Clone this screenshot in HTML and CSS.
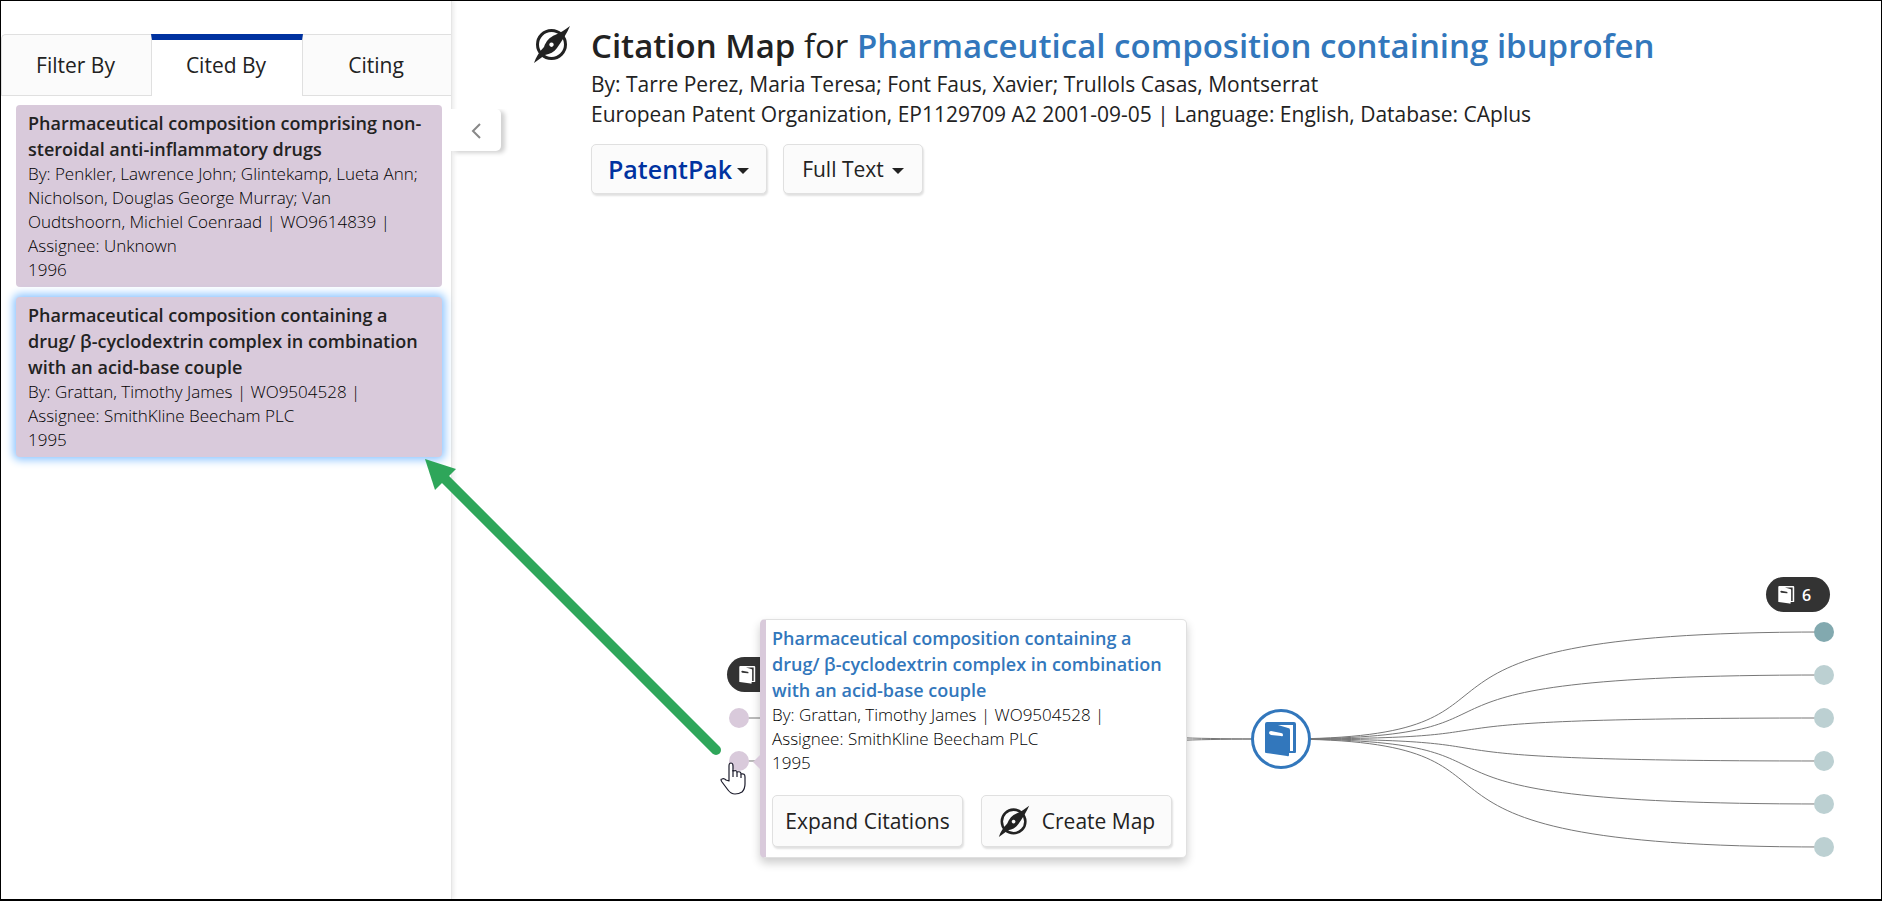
FILE: index.html
```html
<!DOCTYPE html>
<html lang="en">
<head>
    <meta charset="UTF-8">
    <meta name="viewport" content="width=device-width, initial-scale=1.0">
    <title>Citation Map</title>
    <link rel="stylesheet" href="styles.css">
</head>
<body>
    <svg class="symbols" aria-hidden="true">
        <symbol id="icon-compass" viewBox="0 0 38 38">
            <circle cx="18.5" cy="19.5" r="14" fill="none" stroke="currentColor" stroke-width="3"/>
            <path fill="currentColor" fill-rule="evenodd" d="M37 1 C34 8 29 16 24 23 C21 27 17 29 12 30 L1 38 C3 32 6 27 11 22 C13 16 17 12 22 10 C27 8 32 5 37 1 Z M18.500 17.500 a2.200 2.200 0 1 0 0.010 0 Z"/>
        </symbol>
        <symbol id="icon-book" viewBox="0 0 32 35">
            <path fill="currentColor" fill-rule="evenodd" d="M2 0 H29 Q31 0 31 2 V30 Q31 31 30 31 H24 V33 Q24 35 22 34 L1 31 Q0 31 0 30 V2 Q0 0 2 0 Z M13 3 L23 6 Q25 6 25 8 V29 H28 V3 Z M6 9 Q4 9 4 11 Q4 12 6 13 L16 14 Q18 15 18 13 Q18 11 16 11 Z"/>
        </symbol>
    </svg>

    <aside class="sidebar">
        <nav class="tabs">
            <button type="button" class="tab">Filter By</button>
            <button type="button" class="tab active">Cited By</button>
            <button type="button" class="tab">Citing</button>
        </nav>
        <button type="button" class="collapse" aria-label="Collapse panel">
            <svg width="10" height="16" viewBox="0 0 10 16"><path d="M9 1 L2 8 L9 15" fill="none" stroke="#888" stroke-width="2"/></svg>
        </button>
        <div class="cards">
            <article class="card">
                <h2>Pharmaceutical composition comprising non-steroidal anti-inflammatory drugs</h2>
                <p>By: Penkler, Lawrence John; Glintekamp, Lueta Ann; Nicholson, Douglas George Murray; Van Oudtshoorn, Michiel Coenraad | WO9614839 | Assignee: Unknown</p>
                <p>1996</p>
            </article>
            <article class="card selected">
                <h2>Pharmaceutical composition containing a drug/ β-cyclodextrin complex in combination with an acid-base couple</h2>
                <p>By: Grattan, Timothy James | WO9504528 | Assignee: SmithKline Beecham PLC</p>
                <p>1995</p>
            </article>
        </div>
    </aside>

    <main class="content">
        <header class="heading">
            <svg class="heading-icon"><use href="#icon-compass"/></svg>
            <div class="heading-text">
                <h1>Citation Map <span>for</span> <a href="#">Pharmaceutical composition containing ibuprofen</a></h1>
                <p>By: Tarre Perez, Maria Teresa; Font Faus, Xavier; Trullols Casas, Montserrat</p>
                <p>European Patent Organization, EP1129709 A2 2001-09-05 | Language: English, Database: CAplus</p>
                <div class="actions">
                    <button type="button" class="btn patentpak">PatentPak<i class="caret"></i></button>
                    <button type="button" class="btn fulltext">Full Text<i class="caret"></i></button>
                </div>
            </div>
        </header>

        <section class="map">
            <svg class="links" width="1181" height="300" viewBox="0 0 1181 300">
                <g fill="none" stroke="#777" stroke-width="1">
                    <path d="M581 140 C284 140 534 119 39 119"/>
                    <path d="M581 140 C284 140 534 162 39 162"/>
                    <path d="M581 140 C878 140 628 33 1124 33"/>
                    <path d="M581 140 C878 140 628 76 1124 76"/>
                    <path d="M581 140 C878 140 628 119 1124 119"/>
                    <path d="M581 140 C878 140 628 162 1124 162"/>
                    <path d="M581 140 C878 140 628 205 1124 205"/>
                    <path d="M581 140 C878 140 628 248 1124 248"/>
                </g>
                <g fill="#d9cadb">
                    <circle cx="39" cy="119" r="10"/>
                    <circle cx="39" cy="162" r="10"/>
                </g>
                <g fill="#bcd0d2">
                    <circle cx="1124" cy="33" r="10" fill="#82a9af"/>
                    <circle cx="1124" cy="76" r="10"/>
                    <circle cx="1124" cy="119" r="10"/>
                    <circle cx="1124" cy="162" r="10"/>
                    <circle cx="1124" cy="205" r="10"/>
                    <circle cx="1124" cy="248" r="10"/>
                </g>
            </svg>
            <div class="hub"><svg width="32" height="35"><use href="#icon-book"/></svg></div>
            <div class="badge badge-left"><svg width="17" height="18"><use href="#icon-book"/></svg>2</div>
            <div class="badge badge-right"><svg width="17" height="18"><use href="#icon-book"/></svg>6</div>

            <div class="popup">
                <h2><a href="#">Pharmaceutical composition containing a drug/ β-cyclodextrin complex in combination with an acid-base couple</a></h2>
                <p>By: Grattan, Timothy James | WO9504528 | Assignee: SmithKline Beecham PLC</p>
                <p>1995</p>
                <div class="popup-actions">
                    <button type="button" class="btn">Expand Citations</button>
                    <button type="button" class="btn"><svg width="32" height="32"><use href="#icon-compass"/></svg>Create Map</button>
                </div>
            </div>

            <svg class="pointer" width="26" height="34" viewBox="0 0 26 34">
                <path fill="#fff" stroke="#1b1b2b" stroke-width="1.200" stroke-linejoin="round" d="M9 19 V4 Q9 1 11 1 Q13 1 13 4 V9 Q17 8 17 10 Q21 9 21 12 Q25 11 25 15 V22 Q25 27 22 30 Q19 32 15 32 Q11 32 8 28 L2 20 Q0 17 2 17 Q4 16 6 18 Z"/>
                <path fill="none" stroke="#1b1b2b" stroke-width="1.200" d="M13 8 V15 M17 10 V15 M21 12 V16"/>
            </svg>
        </section>
    </main>

    <svg class="arrow" width="310" height="310" viewBox="0 0 310 310">
        <path d="M20 20 L291 291" stroke="#2ea65a" stroke-width="10" stroke-linecap="round"/>
        <path d="M0 0 L31 10 L10 31 Z" fill="#2ea65a"/>
    </svg>
</body>
</html>
```
FILE: styles.css
```css
* { box-sizing: border-box; }
body { margin: 0; min-height: 100vh; display: flex; position: relative; border: 1px solid #000; border-bottom-width: 2px; background: #fff; color: #222; font-family: "Open Sans", "Noto Sans", sans-serif; font-size: 16px; overflow-x: hidden; }
h1, h2, p { margin: 0; font-weight: 400; }
a { color: #3277bc; text-decoration: none; }
button { font: inherit; color: inherit; cursor: pointer; }
.symbols { position: absolute; width: 0; height: 0; }

.sidebar { position: relative; flex: none; width: 451px; padding-top: 33px; border-right: 1px solid #e6e6e6; box-shadow: 2px 0 4px rgba(0, 0, 0, 0.08); }
.tabs { display: grid; grid-template-columns: 150px 152px 1fr; }
.tab { height: 62px; padding: 0 2px 0 0; font-size: 21px; background: #fbfbfb; border: 1px solid #e0e0e0; border-width: 1px 0; }
.tab:first-child { border-left-width: 1px; border-top-left-radius: 5px; }
.tab.active { background: #fff; border: 1px solid #e0e0e0; border-top: 6px solid #0032a0; border-bottom: 0; padding-bottom: 6px; }
.cards { display: flex; flex-direction: column; gap: 10px; padding: 9px 9px 9px 15px; }
.card { padding: 5px 12px; background: #d9cadb; border-radius: 4px; }
.card.selected { box-shadow: 0 0 8px 3px #8fc6ff; }
.card h2, .popup h2 { font-size: 18px; line-height: 26px; font-weight: 600; }
.card p, .popup p { font-size: 17px; line-height: 24px; font-weight: 300; color: #000; }
.collapse { position: absolute; top: 108px; right: -50px; width: 50px; height: 42px; padding: 2px 0 0; display: flex; align-items: center; justify-content: center; background: #fff; border: 0; border-radius: 0 5px 5px 0; box-shadow: 4px 2px 4px rgba(0, 0, 0, 0.18); clip-path: inset(0 -10px -10px 0); }

.content { flex: 1; min-width: 0; display: flex; flex-direction: column; }
.heading { display: flex; gap: 20px; padding: 22px 20px 0 81px; }
.heading-icon { flex: none; width: 38px; height: 38px; margin-top: 2px; }
.heading h1 { font-size: 33px; line-height: 46px; font-weight: 600; }
.heading h1 span { font-weight: 400; }
.heading p { font-size: 21px; line-height: 30px; }
.actions { display: flex; gap: 16px; margin-top: 15px; }
.btn { display: flex; align-items: center; justify-content: center; background: #fbfbfb; border: 1px solid #e0e0e0; border-radius: 5px; box-shadow: 1px 2px 2px rgba(0, 0, 0, 0.12); font-size: 21px; white-space: nowrap; }
.actions .btn { height: 50px; padding: 0 18px; gap: 8px; }
.actions .patentpak { padding: 0 17px 0 16px; gap: 5px; font-size: 25px; font-weight: 600; color: #0032a0; }
.caret { border: 6px solid transparent; border-top-color: #222; border-bottom: 0; margin-top: 4px; }

.map { position: relative; width: 1181px; height: 300px; margin-top: auto; margin-left: auto; }
.links { display: block; }
.hub { position: absolute; left: 551px; top: 110px; width: 60px; height: 60px; display: flex; align-items: center; justify-content: center; border: 3px solid #3277bc; border-radius: 50%; background: #fff; color: #3277bc; }
.badge { position: absolute; width: 64px; height: 35px; display: flex; align-items: center; gap: 7px; padding-left: 12px; border-radius: 18px; background: #333; color: #fff; font-size: 16px; font-weight: 600; }
.badge-left { left: 27px; top: 58px; }
.badge-right { left: 1066px; top: -22px; }
.popup { position: absolute; left: 60px; top: 20px; width: 427px; padding: 5px 14px 10px 6px; background: #fff; border: 1px solid #e0e0e0; border-left: 6px solid #d9cadb; border-radius: 5px; box-shadow: 0 5px 10px rgba(0, 0, 0, 0.2); }
.popup::before { content: ""; position: absolute; left: -13px; top: 134px; border: 8px solid transparent; border-right-color: #d9cadb; border-left: 0; }
.popup-actions { display: flex; gap: 18px; margin-top: 20px; }
.popup-actions .btn { flex: none; width: 191px; height: 52px; padding: 0; gap: 12px; }
.pointer { position: absolute; left: 20px; top: 163px; }
.arrow { position: absolute; left: 424px; top: 458px; pointer-events: none; }
```
